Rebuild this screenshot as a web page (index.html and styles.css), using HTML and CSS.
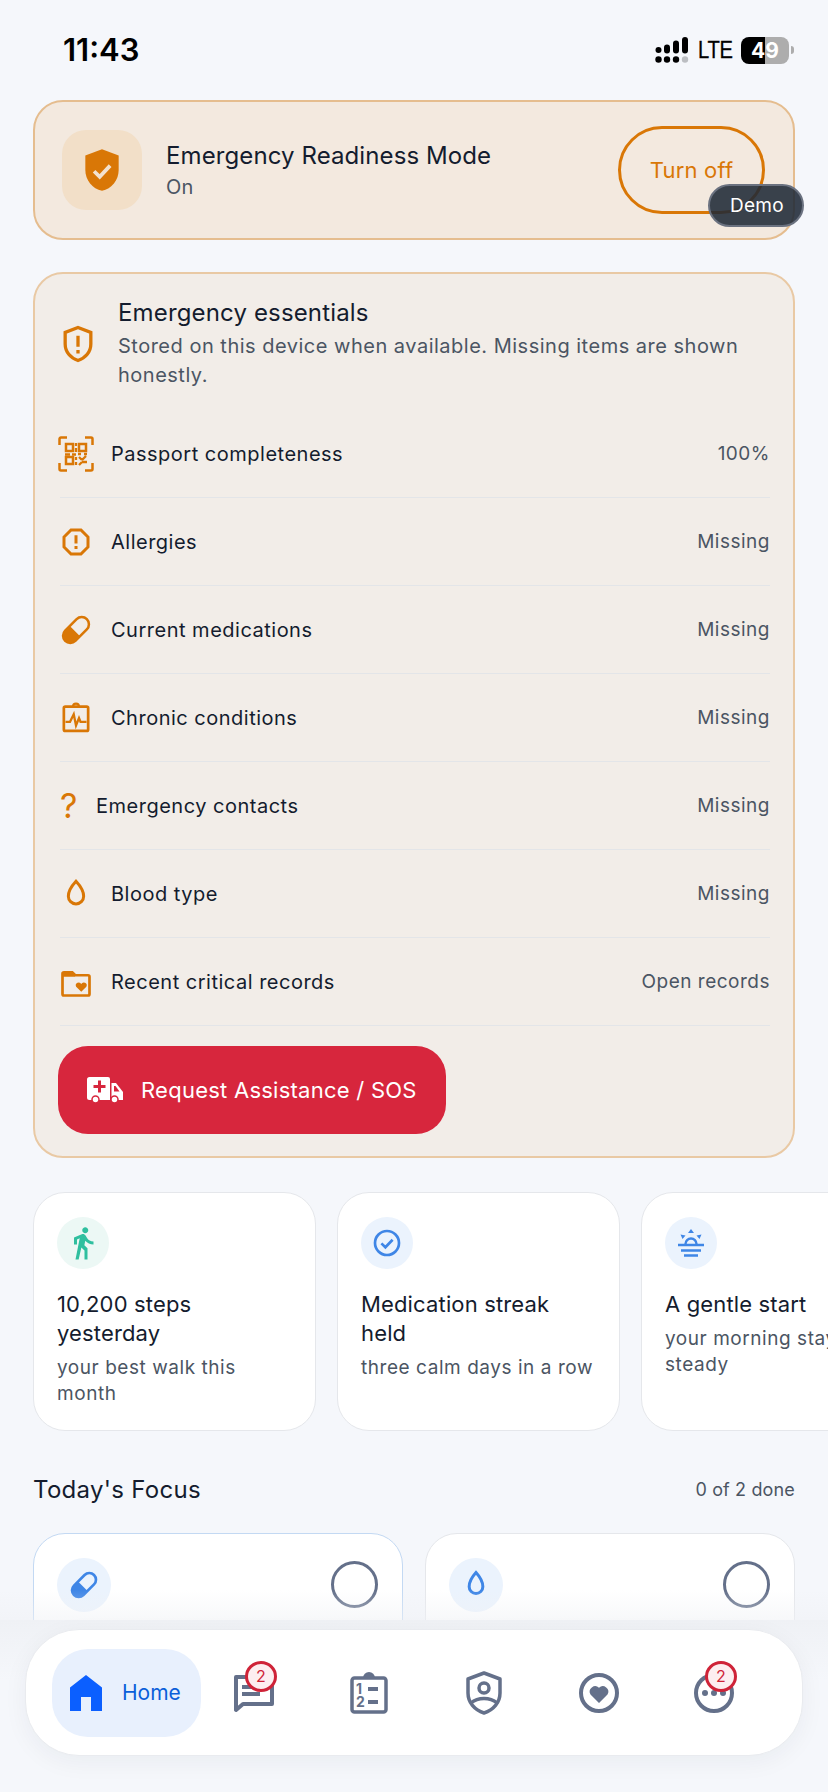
FILE: index.html
```html
<!DOCTYPE html>
<html lang="en">
<head>
  <meta charset="UTF-8">
  <meta name="viewport" content="width=device-width, initial-scale=1.0">
  <title>Home</title>
  <link rel="stylesheet" href="styles.css">
</head>
<body>
  <div class="page">
    <div class="status-bar">
      <span class="clock">11:43</span>
      <div class="status-right">
        <svg class="signal" width="34" height="26" viewBox="0 0 34 26">
          <g fill="#000">
            <circle cx="3.5" cy="13" r="3"/><circle cx="3.5" cy="22.5" r="3.2"/>
            <rect x="9" y="7.5" width="6" height="9" rx="3"/><circle cx="12" cy="22.5" r="3.2"/>
            <rect x="18" y="3.5" width="6" height="13" rx="3"/><circle cx="21" cy="22.5" r="3.2"/>
            <rect x="27" y="0" width="6" height="16.5" rx="3"/>
          </g>
          <circle cx="30" cy="22.5" r="3.2" fill="#bcbec2"/>
        </svg>
        <span class="lte">LTE</span>
        <div class="battery"><span class="battery-level">49</span></div>
        <i class="battery-nub"></i>
      </div>
    </div>

    <div class="banner">
      <div class="banner-icon">
        <svg width="50" height="50" viewBox="0 0 24 24">
          <path d="M12 2l8 3v7c0 5-3.4 9-8 10-4.6-1-8-5-8-10V5z" fill="#d97706"/>
          <path d="M8.2 12.6l2.7 2.7 5-5.4" fill="none" stroke="#f3e2cf" stroke-width="1.8"/>
        </svg>
      </div>
      <div class="banner-text">
        <div class="banner-title">Emergency Readiness Mode</div>
        <div class="banner-sub">On</div>
      </div>
      <button class="turn-off">Turn off</button>
    </div>

    <div class="essentials">
      <div class="essentials-head">
        <svg class="orange-icon" width="44" height="44" viewBox="0 0 24 24">
          <path d="M12 3l7 2.7V12c0 4.3-2.9 7.7-7 9-4.1-1.3-7-4.7-7-9V5.700z" fill="none" stroke="#d97706" stroke-width="1.8"/>
          <path d="M12 7.5v6M12 15.3v1.9" fill="none" stroke="#d97706" stroke-width="1.8"/>
        </svg>
        <div class="essentials-text">
          <div class="essentials-title">Emergency essentials</div>
          <div class="essentials-sub">Stored on this device when available. Missing items are shown honestly.</div>
        </div>
      </div>

      <div class="row">
        <svg class="row-icon" viewBox="0 0 36 36" fill="none" stroke="#d97706" stroke-width="2.5">
          <path d="M1.5 9V3A1.5 1.5 0 0 1 3 1.500h6M27 1.500h6A1.500 1.500 0 0 1 34.500 3v6M1.500 27v6A1.500 1.500 0 0 0 3 34.500h6M27 34.500h6a1.500 1.500 0 0 0 1.500-1.500v-6"/>
          <rect x="8" y="8" width="7" height="7"/>
          <rect x="21" y="8" width="7" height="7"/>
          <rect x="8" y="21" width="7" height="7"/>
          <path d="M18 7v3M18 12v4M7 18.500h5M14 18.500h4M20 18h3M26 18h3M18 21v3M18 26v3M21 21l3 3M24 24l4-4M21 29l3-3M24 26h5" stroke-width="2.3"/>
        </svg>
        <span class="row-label">Passport completeness</span>
        <span class="row-value">100%</span>
      </div>
      <div class="row">
        <svg class="row-icon" viewBox="0 0 24 24" fill="none" stroke="#d97706" stroke-width="2">
          <path d="M8.7 4h6.600L20 8.700v6.600L15.300 20H8.700L4 15.300V8.700z"/>
          <path d="M12 7.5v5.500M12 14.700v2"/>
        </svg>
        <span class="row-label">Allergies</span>
        <span class="row-value">Missing</span>
      </div>
      <div class="row">
        <svg class="row-icon" viewBox="0 0 24 24">
          <g transform="rotate(-45 12 12)">
            <rect x="1.8" y="7.2" width="20.4" height="9.6" rx="4.8" fill="none" stroke="#d97706" stroke-width="1.7"/>
            <path d="M11 7.2H6.600a4.800 4.800 0 0 0 0 9.600H11z" fill="#d97706"/>
          </g>
        </svg>
        <span class="row-label">Current medications</span>
        <span class="row-value">Missing</span>
      </div>
      <div class="row">
        <svg class="row-icon" viewBox="0 0 24 24" fill="none" stroke="#d97706" stroke-width="1.8">
          <rect x="3.9" y="4.4" width="16.2" height="16.2" rx="1"/>
          <path d="M10 4.4a2 2 0 0 1 4 0" stroke-width="1.4"/>
          <path d="M5 14.5h3l2.500-5 1.500 7.500 2-5 1 2.500h4" stroke-width="1.5"/>
        </svg>
        <span class="row-label">Chronic conditions</span>
        <span class="row-value">Missing</span>
      </div>
      <div class="row">
        <span class="question">?</span>
        <span class="row-label">Emergency contacts</span>
        <span class="row-value">Missing</span>
      </div>
      <div class="row">
        <svg class="row-icon" viewBox="0 0 24 24">
          <path d="M12 3.500C12 3.500 6.900 9 6.900 13.500a5.100 5.100 0 0 0 10.200 0C17.100 9 12 3.500 12 3.500z" fill="none" stroke="#d97706" stroke-width="2"/>
        </svg>
        <span class="row-label">Blood type</span>
        <span class="row-value">Missing</span>
      </div>
      <div class="row">
        <svg class="row-icon" viewBox="0 0 24 24">
          <path d="M3 6.500a1 1 0 0 1 1-1h5.500l2 2H20a1 1 0 0 1 1 1V20a1 1 0 0 1-1 1H4a1 1 0 0 1-1-1z" fill="none" stroke="#d97706" stroke-width="1.8"/>
          <path d="M3 6h6.500l2 2.500H3z" fill="#d97706"/>
          <path d="M15.500 18.500l-3.400-3.400a1.900 1.900 0 0 1 3.400-1.700 1.900 1.900 0 0 1 3.400 1.700z" fill="#d97706"/>
        </svg>
        <span class="row-label">Recent critical records</span>
        <span class="row-value">Open records</span>
      </div>

      <button class="sos">
        <svg width="36" height="27" viewBox="0 0 36 27">
          <path d="M2.500 0H21a2 2 0 0 1 2 2v21H2.500A2.500 2.500 0 0 1 0 20.500v-18A2.500 2.500 0 0 1 2.500 0z" fill="#fff"/>
          <path d="M24.500 6H29l7 9v8H24.500z" fill="#fff"/>
          <path d="M27 9h1.500l4 5.500H27z" fill="#d7263d"/>
          <path d="M12.500 3.500v12M6.500 9.500h12" stroke="#d7263d" stroke-width="3"/>
          <circle cx="8.500" cy="22.500" r="3.500" fill="#fff" stroke="#d7263d" stroke-width="1.5"/>
          <circle cx="27.500" cy="22.500" r="3.500" fill="#fff" stroke="#d7263d" stroke-width="1.5"/>
        </svg>
        <span>Request Assistance / SOS</span>
      </button>
    </div>

    <div class="carousel">
      <div class="moment">
        <div class="moment-icon green">
          <svg width="36" height="36" viewBox="0 0 24 24" fill="#2fbf9f">
            <path d="M13.500 5.500c1.100 0 2-.9 2-2s-.9-2-2-2-2 .9-2 2 .9 2 2 2zM9.800 8.900L7 23h2.100l1.800-8 2.100 2v6h2v-7.500l-2.100-2 .6-3C14.800 12 16.800 13 19 13v-2c-1.900 0-3.500-1-4.300-2.400l-1-1.600c-.4-.6-1-1-1.700-1-.3 0-.5.1-.8.1L6 8.300V13h2V9.600l1.800-.7"/>
          </svg>
        </div>
        <div class="moment-title">10,200 steps yesterday</div>
        <div class="moment-sub">your best walk this month</div>
      </div>
      <div class="moment">
        <div class="moment-icon blue">
          <svg width="32" height="32" viewBox="0 0 24 24" fill="none" stroke="#3f86e6" stroke-width="2">
            <circle cx="12" cy="12" r="9"/>
            <path d="M7.800 12.300l3 2.900 5.400-5.600"/>
          </svg>
        </div>
        <div class="moment-title">Medication streak held</div>
        <div class="moment-sub">three calm days in a row</div>
      </div>
      <div class="moment">
        <div class="moment-icon blue">
          <svg width="28" height="28" viewBox="0 0 28 28" fill="none" stroke="#3f86e6" stroke-width="2.4">
            <path d="M1 16h26M4 21.500h20M7 26.500h14"/>
            <path d="M8.500 15a5.500 5.500 0 0 1 11 0"/>
            <path d="M14 0l3 4h-6zM3.500 5.500l5 1-3 3.500zM24.500 5.500l-5 1 3 3.500z" fill="#3f86e6" stroke="none"/>
          </svg>
        </div>
        <div class="moment-title">A gentle start</div>
        <div class="moment-sub">your morning stays steady</div>
      </div>
    </div>

    <div class="section-head">
      <span class="section-title">Today's Focus</span>
      <span class="section-count">0 of 2 done</span>
    </div>

    <div class="focus-grid">
      <div class="focus-card first">
        <div class="focus-icon">
          <svg width="40" height="40" viewBox="0 0 24 24">
            <g transform="rotate(-45 12 12)">
              <rect x="3.500" y="8" width="17" height="8" rx="4" fill="none" stroke="#3f86e6" stroke-width="1.6"/>
              <path d="M11 8H7.500a4 4 0 0 0 0 8H11z" fill="#3f86e6"/>
            </g>
          </svg>
        </div>
        <div class="focus-check"></div>
      </div>
      <div class="focus-card">
        <div class="focus-icon">
          <svg width="40" height="40" viewBox="0 0 24 24">
            <path d="M12 4.500C12 4.500 7.900 9 7.900 13a4.100 4.100 0 0 0 8.200 0C16.100 9 12 4.500 12 4.500z" fill="none" stroke="#3f86e6" stroke-width="1.8"/>
          </svg>
        </div>
        <div class="focus-check"></div>
      </div>
    </div>
  </div>

  <div class="demo-tag">Demo</div>

  <div class="bottom-bar">
    <nav class="nav">
      <div class="nav-home">
        <svg width="32" height="36" viewBox="0 0 32 36">
          <path d="M16 0l16 12.500V36H21V22H11v14H0V12.500z" fill="#0b5fff"/>
        </svg>
        <span>Home</span>
      </div>
      <div class="nav-item">
        <svg width="40" height="40" viewBox="0 0 40 40" fill="none" stroke="#64708a" stroke-width="4">
          <path d="M2 4h36v27H9l-7 6z" stroke-linejoin="round"/>
          <path d="M8 14h18M8 21h18"/>
        </svg>
        <span class="badge">2</span>
      </div>
      <div class="nav-item">
        <svg width="38" height="42" viewBox="0 0 38 42" fill="none" stroke="#64708a" stroke-width="3.5">
          <rect x="2" y="6" width="34" height="34" rx="2.5"/>
          <path d="M14 6a5 5 0 0 1 10 0" fill="#64708a" stroke-width="2"/>
          <path d="M18 17h10M18 30h10" stroke-width="4"/>
          <text x="6" y="22" class="nav-digit">1</text>
          <text x="6" y="35" class="nav-digit">2</text>
        </svg>
      </div>
      <div class="nav-item">
        <svg width="38" height="44" viewBox="0 0 38 44" fill="none" stroke="#64708a" stroke-width="3.5">
          <path d="M19 2l16 6v14c0 9.500-6.500 17-16 20C9.500 39 3 31.500 3 22V8z" stroke-linejoin="round"/>
          <circle cx="19" cy="17" r="5"/>
          <path d="M6 32c3.500-3 8-4.500 13-4.500S28.500 29 32 32"/>
        </svg>
      </div>
      <div class="nav-item">
        <svg width="40" height="40" viewBox="0 0 40 40">
          <circle cx="20" cy="20" r="18" fill="none" stroke="#64708a" stroke-width="4"/>
          <path d="M20 30l-8.500-8.500a5.500 5.500 0 0 1 8.500-6.800 5.500 5.500 0 0 1 8.500 6.800z" fill="#64708a"/>
        </svg>
      </div>
      <div class="nav-item">
        <svg width="40" height="40" viewBox="0 0 40 40" fill="#64708a">
          <circle cx="20" cy="20" r="18" fill="none" stroke="#64708a" stroke-width="4"/>
          <circle cx="11" cy="20" r="3"/><circle cx="20" cy="20" r="3"/><circle cx="29" cy="20" r="3"/>
        </svg>
        <span class="badge">2</span>
      </div>
    </nav>
  </div>
</body>
</html>
```

FILE: styles.css
```css
html,body{
  margin : 0;
  width : 828px;
  height : 1792px;
  overflow : hidden;
  background : #f5f7fb;
  font-family : Inter, "Liberation Sans", sans-serif;
  color : #141c2e;
}
body{
  position : relative;
}
.page{
  padding : 0 33px;
}

/* status bar */
.status-bar{
  height : 100px;
  display : flex;
  justify-content : space-between;
  align-items : flex-start;
}
.clock{
  margin : 30px 0 0 30px;
  font-size : 31px;
  line-height : 40px;
  font-weight : 600;
  color : #000;
}
.status-right{
  display : flex;
  align-items : center;
  margin : 36px 1px 0 0;
  height : 28px;
}
.lte{
  margin-left : 9px;
  width : 35px;
  font-family : "Liberation Sans", sans-serif;
  font-size : 24px;
  letter-spacing : -0.3px;
  color : #000;
  -webkit-text-stroke : .3px #000;
  transform : scaleX(.84);
  transform-origin : left;
}
.battery{
  margin-left : 8px;
  width : 48px;
  height : 27px;
  border-radius : 8px;
  background : linear-gradient(90deg, #000 0, #000 49%, #adadad 49%, #adadad 100%);
  text-align : center;
}
.battery-level{
  font-size : 21px;
  line-height : 27px;
  font-weight : 700;
  color : #fff;
  display : block;
}
.battery-nub{
  display : block;
  width : 3px;
  height : 8px;
  margin-left : 2px;
  background : #adadad;
  border-radius : 0 3px 3px 0;
}

/* readiness banner */
.banner{
  height : 140px;
  box-sizing : border-box;
  display : flex;
  align-items : center;
  padding : 0 28px 0 27px;
  background : #f3e9df;
  border : 2px solid #e5bd8f;
  border-radius : 30px;
}
.banner-icon{
  width : 80px;
  height : 80px;
  border-radius : 24px;
  background : #f2dfc8;
  display : flex;
  align-items : center;
  justify-content : center;
}
.banner-text{
  flex : 1;
  margin-left : 24px;
  padding-top : 2px;
}
.banner-title{
  font-size : 24px;
  line-height : 32px;
  letter-spacing : .1px;
}
.banner-sub{
  font-size : 20px;
  line-height : 30px;
  color : #4b5563;
  letter-spacing : .3px;
}
.turn-off{
  width : 147px;
  height : 88px;
  box-sizing : border-box;
  border : 3px solid #d97706;
  border-radius : 44px;
  background : transparent;
  color : #d97706;
  font : 400 22px Inter, sans-serif;
  letter-spacing : .2px;
}
.demo-tag{
  position : absolute;
  left : 708px;
  top : 184px;
  width : 96px;
  height : 43px;
  box-sizing : border-box;
  border : 2px solid #6b7280;
  border-radius : 22px;
  background : rgba(31,41,55,.88);
  color : #fff;
  font-size : 19px;
  line-height : 39px;
  letter-spacing : .3px;
  text-align : center;
  padding-left : 2px;
}

/* essentials card */
.essentials{
  margin-top : 32px;
  height : 886px;
  box-sizing : border-box;
  padding : 24px 23px 0 25px;
  background : #f2ede8;
  border : 2px solid #e9c9a4;
  border-radius : 30px;
}
.essentials-head{
  display : flex;
  align-items : center;
  margin-bottom : 20px;
}
.orange-icon{
  flex : none;
  margin : 0 18px 0 -4px;
}
.essentials-title{
  font-size : 24px;
  line-height : 30px;
  letter-spacing : .15px;
}
.essentials-sub{
  margin-top : 4px;
  font-size : 20px;
  line-height : 29px;
  color : #4b5563;
  letter-spacing : .5px;
}
.row{
  height : 88px;
  box-sizing : border-box;
  display : flex;
  align-items : center;
  gap : 17px;
  border-bottom : 1px solid #e3e5e8;
}
.row-icon{
  flex : none;
  width : 36px;
  height : 36px;
  margin-left : -2px;
}
.question{
  flex : none;
  width : 19px;
  font-size : 34px;
  line-height : 36px;
  color : #d97706;
}
.row-label{
  flex : 1;
  font-size : 20px;
  letter-spacing : .5px;
}
.row-value{
  font-size : 19px;
  color : #4b5563;
  letter-spacing : .5px;
}
.sos{
  margin : 20px 0 0 -2px;
  width : 388px;
  height : 88px;
  display : flex;
  align-items : center;
  gap : 18px;
  padding : 0 0 0 29px;
  border : none;
  border-radius : 30px;
  background : #d7263d;
  color : #fff;
  font : 400 22px Inter, sans-serif;
  letter-spacing : .25px;
}

/* moment cards */
.carousel{
  margin-top : 34px;
  margin-right : -33px;
  display : flex;
  gap : 21px;
  overflow : hidden;
}
.moment{
  flex : none;
  width : 283px;
  height : 239px;
  box-sizing : border-box;
  padding : 24px 22px 0 23px;
  background : #fff;
  border : 1px solid #e5e7eb;
  border-radius : 32px;
}
.moment-icon{
  width : 52px;
  height : 52px;
  border-radius : 50%;
  display : flex;
  align-items : center;
  justify-content : center;
  margin-bottom : 21px;
}
.green{
  background : #ecf8f5;
}
.blue{
  background : #ebf3fd;
}
.moment-title{
  font-size : 22px;
  line-height : 29px;
  letter-spacing : .15px;
}
.moment-sub{
  margin-top : 7px;
  font-size : 19px;
  line-height : 26px;
  color : #4b5563;
  letter-spacing : .55px;
}

/* today's focus */
.section-head{
  margin-top : 41px;
  display : flex;
  justify-content : space-between;
  align-items : center;
  height : 34px;
}
.section-title{
  font-size : 24px;
  letter-spacing : .3px;
}
.section-count{
  font-size : 18px;
  color : #4b5563;
  letter-spacing : .15px;
}
.focus-grid{
  margin-top : 27px;
  display : flex;
  gap : 22px;
}
.focus-card{
  flex : 1;
  height : 200px;
  box-sizing : border-box;
  padding : 24px 24px 0 23px;
  display : flex;
  justify-content : space-between;
  align-items : flex-start;
  background : #fff;
  border : 1px solid #e5e7eb;
  border-radius : 32px;
}
.focus-card.first{
  border-color : #c3d9f3;
}
.focus-icon{
  width : 54px;
  height : 54px;
  border-radius : 50%;
  background : #ebf3fd;
  display : flex;
  align-items : center;
  justify-content : center;
}
.focus-check{
  width : 47px;
  height : 47px;
  box-sizing : border-box;
  margin-top : 3px;
  border : 3px solid #64708a;
  border-radius : 50%;
}

/* bottom nav */
.bottom-bar{
  position : absolute;
  left : 0;
  right : 0;
  top : 1620px;
  bottom : 0;
  box-sizing : border-box;
  padding : 9px 25px 0;
  background : linear-gradient(#eff1f5 0, #f5f7fb 60px);
}
.bottom-bar::before{
  content : "";
  position : absolute;
  left : 0;
  right : 0;
  top : -30px;
  height : 30px;
  background : linear-gradient(rgba(239,241,245,0), rgba(239,241,245,.5));
}
.nav{
  height : 127px;
  box-sizing : border-box;
  padding-left : 26px;
  display : flex;
  align-items : center;
  background : #fff;
  border : 1px solid #e9ebef;
  border-radius : 54px;
  box-shadow : 0 6px 24px rgba(20,30,50,.05);
}
.nav-home{
  flex : none;
  width : 149px;
  height : 88px;
  margin-right : -5px;
  box-sizing : border-box;
  padding-left : 18px;
  display : flex;
  align-items : center;
  gap : 20px;
  background : #e8f0fd;
  border-radius : 36px;
  font-size : 21px;
  color : #0b5fd9;
}
.nav-item{
  flex : none;
  position : relative;
  width : 115px;
  display : flex;
  justify-content : center;
}
.nav-digit{
  font : 700 14px Inter, sans-serif;
  fill : #64708a;
  stroke : none;
}
.badge{
  position : absolute;
  left : 49px;
  top : -12px;
  width : 32px;
  height : 31px;
  box-sizing : border-box;
  border : 3px solid #cf2338;
  border-radius : 50%;
  background : #fdeef0;
  color : #cf2338;
  font-size : 16px;
  line-height : 25px;
  text-align : center;
}
```
